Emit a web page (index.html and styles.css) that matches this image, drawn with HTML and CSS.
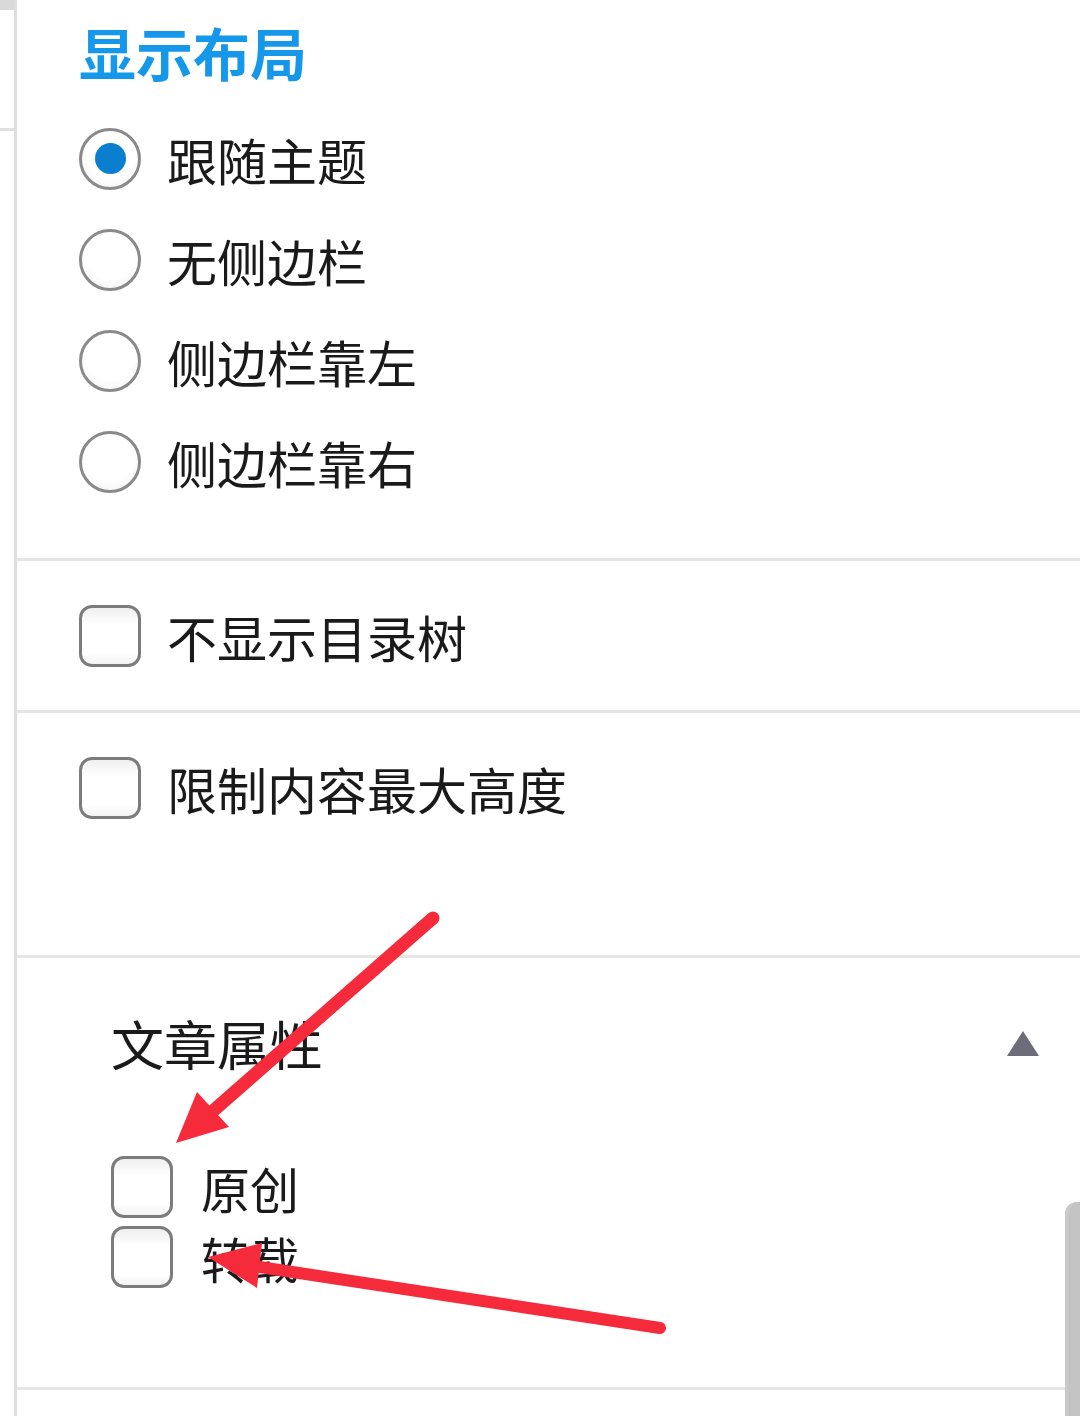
FILE: index.html
```html
<!DOCTYPE html>
<html lang="zh-CN">
<head>
<meta charset="utf-8">
<title>显示布局</title>
<link rel="stylesheet" href="styles.css">
</head>
<body>
<div class="page">
  <div class="gutter">
    <div class="gutter-top"></div>
    <div class="gutter-line"></div>
  </div>
  <main class="panel">
    <section class="sec sec-layout">
      <h2 class="title">显示布局</h2>
      <div class="opt"><span class="radio checked"></span><span class="label">跟随主题</span></div>
      <div class="opt"><span class="radio"></span><span class="label">无侧边栏</span></div>
      <div class="opt"><span class="radio"></span><span class="label">侧边栏靠左</span></div>
      <div class="opt"><span class="radio"></span><span class="label">侧边栏靠右</span></div>
    </section>
    <section class="sec sec-toc">
      <div class="opt"><span class="check"></span><span class="label">不显示目录树</span></div>
    </section>
    <section class="sec sec-height">
      <div class="opt"><span class="check"></span><span class="label">限制内容最大高度</span></div>
    </section>
    <section class="sec sec-attr">
      <div class="attr-head">
        <span class="attr-title">文章属性</span>
        <span class="tri"></span>
      </div>
      <div class="attr-list">
        <div class="opt small"><span class="check"></span><span class="label">原创</span></div>
        <div class="opt small"><span class="check"></span><span class="label">转载</span></div>
      </div>
    </section>
  </main>
  <div class="scrollbar"></div>
  <svg class="arrows" width="1080" height="1416" viewBox="0 0 1080 1416">
    <line x1="433" y1="918" x2="205" y2="1118" stroke="#f52a3a" stroke-width="13" stroke-linecap="round"/>
    <polygon points="176,1143 197,1092 229,1127" fill="#f52a3a"/>
    <line x1="660" y1="1328" x2="240" y2="1264" stroke="#f52a3a" stroke-width="12" stroke-linecap="round"/>
    <polygon points="208,1257 262,1243 257,1288" fill="#f52a3a"/>
  </svg>
</div>
</body>
</html>
```
FILE: styles.css
```css
html, body {
  margin: 0;
  padding: 0;
  background: #ffffff;
}
body {
  font-family: "Noto Sans CJK SC", "Noto Sans", sans-serif;
  color: #1c1c1c;
}
.page {
  position: relative;
  width: 1080px;
  height: 1416px;
  overflow: hidden;
  display: flex;
}
.gutter {
  width: 14px;
  flex: none;
  display: flex;
  flex-direction: column;
}
.gutter-top {
  height: 10px;
  background: #d9d9d9;
}
.gutter-line {
  margin-top: 118px;
  height: 3px;
  background: #e0e0e0;
}
.panel {
  flex: 1;
  border-left: 3px solid #dedede;
  display: flex;
  flex-direction: column;
}
.sec {
  border-bottom: 3px solid #e6e6e6;
  padding-left: 62px;
  flex: none;
}
.sec-layout {
  padding-top: 16px;
  height: 561px;
  box-sizing: border-box;
}
.title {
  margin: 0 0 22px 0;
  height: 70px;
  line-height: 70px;
  font-size: 57px;
  font-weight: 700;
  color: #1597ea;
  letter-spacing: 0;
}
.opt {
  display: flex;
  align-items: center;
  height: 101px;
}
.label {
  margin-left: 26px;
  font-size: 50px;
  line-height: 1;
  color: #1a1a1a;
}
.radio {
  width: 56px;
  height: 56px;
  flex: none;
  border: 3px solid #8a8a8a;
  border-radius: 50%;
  background: radial-gradient(circle at 50% 40%, #ffffff 55%, #efefef 100%);
  display: flex;
  align-items: center;
  justify-content: center;
  box-sizing: content-box;
}
.radio.checked::after {
  content: "";
  width: 31px;
  height: 31px;
  border-radius: 50%;
  background: #0a7fcf;
}
.check {
  width: 56px;
  height: 56px;
  flex: none;
  border: 3px solid #7c7c7c;
  border-radius: 13px;
  background: linear-gradient(#efefef, #ffffff 30%, #ffffff 80%, #f3f3f3);
  box-sizing: content-box;
}
.sec-toc {
  height: 152px;
  box-sizing: border-box;
  display: flex;
  align-items: center;
}
.sec-height {
  height: 245px;
  box-sizing: border-box;
  padding-top: 24px;
}
.sec-attr {
  height: 432px;
  box-sizing: border-box;
  padding-left: 94px;
  padding-right: 41px;
  padding-top: 53px;
}
.attr-head {
  display: flex;
  align-items: center;
  justify-content: space-between;
  height: 64px;
}
.attr-title {
  font-size: 53px;
  line-height: 1;
  color: #1a1a1a;
}
.tri {
  width: 0;
  height: 0;
  border-left: 16px solid transparent;
  border-right: 16px solid transparent;
  border-bottom: 25px solid #6d6d79;
}
.attr-list {
  margin-top: 77px;
}
.opt.small {
  height: 70px;
}
.opt.small .label {
  margin-left: 28px;
  font-size: 49px;
}
.scrollbar {
  position: absolute;
  right: 0;
  top: 1202px;
  width: 15px;
  bottom: 0;
  background: #c3c3c3;
  border-top-left-radius: 12px;
  box-shadow: inset 4px 0 0 #c9c9c9;
}
.arrows {
  position: absolute;
  left: 0;
  top: 0;
  pointer-events: none;
}
```
